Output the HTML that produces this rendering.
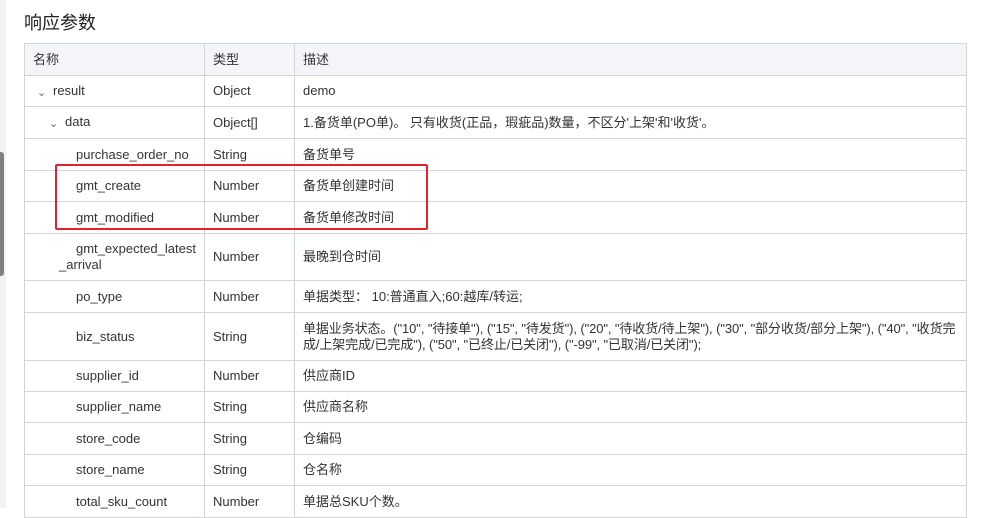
<!DOCTYPE html>
<html><head><meta charset="utf-8"><style>
body{margin:0;width:996px;height:508px;overflow:hidden;background:#fff;font-family:"Liberation Sans","Noto Sans CJK SC",sans-serif;color:#333;position:relative}
.strip{position:absolute;left:0;top:0;width:6px;height:508px;background:#f3f3f3}
.sb{position:absolute;left:0;top:152px;width:4px;height:124px;background:#808080;border-radius:0 3px 3px 0}
h1{position:absolute;left:24px;top:9px;margin:0;font-size:18px;font-weight:normal;color:#222}
table{position:absolute;left:24px;top:43px;border-collapse:collapse;width:943px;table-layout:fixed;font-size:13px}
td,th{border:1px solid #d0d5dc;padding:0 8px;text-align:left;font-weight:normal;vertical-align:middle;line-height:16px}
th{background:#f3f5f8;height:31px}
.c{color:#666;font-size:11px;display:inline-block;width:10px;margin-right:6px;margin-left:4px;position:relative;top:1px}
.r{position:absolute;left:55px;top:164px;width:369px;height:62px;border:2.5px solid #e8202a;border-radius:2px}
</style></head><body>
<div class="strip"></div><div class="sb"></div>
<h1>响应参数</h1>
<table>
<colgroup><col style="width:180px"><col style="width:90px"><col></colgroup>
<tr><th>名称</th><th>类型</th><th>描述</th></tr>
<tr><td style="height:30px"><span class="c">⌄</span>result</td><td>Object</td><td>demo</td></tr>
<tr><td style="height:31px;padding-left:20px"><span class="c">⌄</span>data</td><td>Object[]</td><td>1.备货单(PO单)。 只有收货(正品，瑕疵品)数量，不区分'上架'和'收货'。</td></tr>
<tr><td style="height:31px;padding-left:51px">purchase_order_no</td><td>String</td><td>备货单号</td></tr>
<tr><td style="height:30px;padding-left:51px">gmt_create</td><td>Number</td><td>备货单创建时间</td></tr>
<tr><td style="height:31px;padding-left:51px">gmt_modified</td><td>Number</td><td>备货单修改时间</td></tr>
<tr><td style="height:46px;padding-left:34px;text-indent:17px">gmt_expected_latest _arrival</td><td>Number</td><td>最晚到仓时间</td></tr>
<tr><td style="height:31px;padding-left:51px">po_type</td><td>Number</td><td>单据类型： 10:普通直入;60:越库/转运;</td></tr>
<tr><td style="height:47px;padding-left:51px">biz_status</td><td>String</td><td style="padding-right:2px;letter-spacing:-0.1px">单据业务状态。("10", "待接单"), ("15", "待发货"), ("20", "待收货/待上架"), ("30", "部分收货/部分上架"), ("40", "收货完成/上架完成/已完成"), ("50", "已终止/已关闭"), ("-99", "已取消/已关闭");</td></tr>
<tr><td style="height:30px;padding-left:51px">supplier_id</td><td>Number</td><td>供应商ID</td></tr>
<tr><td style="height:30px;padding-left:51px">supplier_name</td><td>String</td><td>供应商名称</td></tr>
<tr><td style="height:31px;padding-left:51px">store_code</td><td>String</td><td>仓编码</td></tr>
<tr><td style="height:30px;padding-left:51px">store_name</td><td>String</td><td>仓名称</td></tr>
<tr><td style="height:31px;padding-left:51px">total_sku_count</td><td>Number</td><td>单据总SKU个数。</td></tr>
</table>
<div class="r"></div>
</body></html>
